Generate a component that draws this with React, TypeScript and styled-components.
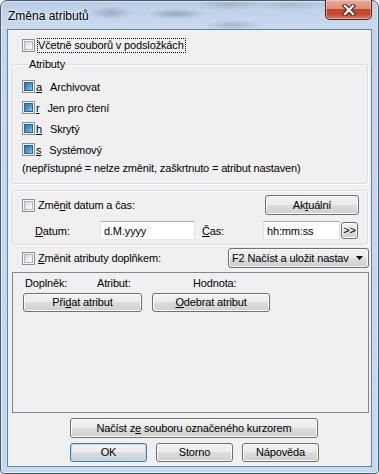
import styled, { createGlobalStyle } from 'styled-components';

const GlobalStyle = createGlobalStyle`
  html, body {
    margin: 0;
    padding: 0;
    background: #ffffff;
  }
  body {
    color: #000;
    font-family: "Liberation Sans", Arial, sans-serif;
    font-size: 11px;
    letter-spacing: -0.15px;
  }
`;

const Window = styled.div`
  box-sizing: border-box;
  display: flex;
  flex-direction: column;
  width: 379px;
  height: 474px;
  padding: 0 6px 6px;
  border: 1px solid #4d5967;
  border-radius: 7px 7px 4px 4px;
  background:
    radial-gradient(ellipse 22px 7px at 110px 12px, rgba(70, 80, 95, 0.28), transparent),
    radial-gradient(ellipse 30px 5px at 175px 13px, rgba(60, 70, 85, 0.32), transparent),
    radial-gradient(ellipse 36px 6px at 228px 3px, rgba(70, 80, 95, 0.22), transparent),
    radial-gradient(ellipse 30px 5px at 232px 24px, rgba(70, 80, 95, 0.25), transparent),
    radial-gradient(ellipse 40px 5px at 290px 4px, rgba(80, 90, 105, 0.18), transparent),
    linear-gradient(to bottom, #b9cee6 0, #c8daee 28px, #bed6f0 29px, #c2daf2 100%);
  box-shadow: inset 0 0 0 1px rgba(255, 255, 255, 0.5);
`;

const TitleBar = styled.div`
  display: flex;
  flex: none;
  align-items: flex-start;
  justify-content: space-between;
  height: 28px;
`;

const Title = styled.div`
  margin: 8px 0 0 1px;
  font-size: 12px;
  line-height: 15px;
  letter-spacing: 0;
  text-shadow: 0 0 6px rgba(255, 255, 255, 0.9), 0 0 2px rgba(255, 255, 255, 0.9);
`;

const CloseButton = styled.div`
  box-sizing: border-box;
  display: flex;
  align-items: center;
  justify-content: center;
  width: 47px;
  height: 20px;
  margin-top: -1px;
  border: 1px solid #5e2418;
  border-top: none;
  border-radius: 0 0 5px 5px;
  background: linear-gradient(
    to bottom,
    #e9ad9f 0%,
    #dc8e7c 45%,
    #c4452d 50%,
    #c9472f 75%,
    #de7c60 100%
  );
  box-shadow: inset 0 0 0 1px rgba(255, 220, 210, 0.45);
`;

const Client = styled.div`
  box-sizing: border-box;
  display: flex;
  flex: none;
  flex-direction: column;
  align-items: flex-start;
  height: 438px;
  padding: 7px 2px 0 4px;
  border: 1px solid #6f8094;
  background: #f0f0f0;
`;

const Check = styled.span<{ $mixed?: boolean }>`
  position: relative;
  box-sizing: border-box;
  flex: none;
  width: 13px;
  height: 13px;
  border: 1px solid #8e8f8f;
  background: #f6f6f6;

  &::after {
    content: '';
    position: absolute;
    top: 1px;
    left: 1px;
    box-sizing: border-box;
    width: 9px;
    height: 9px;
    border: 1px solid ${(p) => (p.$mixed ? '#2a6290' : '#b1b5ba')};
    background: ${(p) =>
      p.$mixed
        ? 'linear-gradient(135deg, #3079b3 0%, #4898d0 50%, #84c8ec 100%)'
        : 'linear-gradient(135deg, #cfd2d7 0%, #eceef0 55%, #fbfbfb 100%)'};
  }
`;

const CheckRow = styled.div<{ $indent?: number }>`
  display: flex;
  flex: none;
  align-items: center;
  height: 16px;
  margin-left: ${(p) => p.$indent ?? 0}px;
`;

const CheckText = styled.span`
  margin-left: 3px;
  line-height: 13px;
  white-space: nowrap;
`;

const FocusText = styled.span`
  margin-left: 2px;
  padding-right: 1px;
  border: 1px dotted #000;
  line-height: 13px;
  white-space: nowrap;
`;

const Group = styled.fieldset<{ $gap: number }>`
  box-sizing: border-box;
  width: 356px;
  min-width: 0;
  margin: ${(p) => p.$gap}px 0 0;
  padding: 4px 8px 4px 9px;
  border: 1px solid #d5dfe5;
  border-radius: 3px;
  box-shadow: inset 1px 1px 0 #ffffff, 1px 1px 0 #ffffff;
`;

const AttrGroup = styled(Group)`
  padding: 5px 8px 7px 9px;
`;

const Legend = styled.legend`
  margin-left: 6px;
  padding: 0 1px;
  line-height: 13px;
`;

const AttrRow = styled.div`
  display: flex;
  align-items: center;
  height: 21px;
  white-space: nowrap;
`;

const Key = styled.u`
  margin: 0 8px 0 1px;
`;

const Note = styled.div`
  height: 16px;
  line-height: 16px;
  white-space: nowrap;
`;

const DateRow = styled.div`
  display: flex;
  align-items: center;
  height: 20px;
`;

const TimeRow = styled.div`
  display: flex;
  align-items: center;
  height: 19px;
  margin-top: 6px;
  padding-left: 13px;
`;

const FieldLabel = styled.span<{ $w: number; $gap?: number }>`
  flex: none;
  width: ${(p) => p.$w}px;
  margin-left: ${(p) => p.$gap ?? 0}px;
`;

const TextBox = styled.input<{ $w: number }>`
  box-sizing: border-box;
  flex: none;
  width: ${(p) => p.$w}px;
  height: 19px;
  margin: 0;
  padding: 0 3px;
  border: 1px solid;
  border-color: #abadb3 #dbdfe6 #e3e9ef #e2e3ea;
  background: #ffffff;
  color: #000;
  font: inherit;
  letter-spacing: inherit;
  outline: none;
`;

const Button = styled.button<{ $w: number; $h?: number; $default?: boolean }>`
  box-sizing: border-box;
  flex: none;
  width: ${(p) => p.$w}px;
  height: ${(p) => p.$h ?? 20}px;
  margin: 0;
  padding: 0;
  border: 1px solid ${(p) => (p.$default ? '#3c7fb1' : '#707070')};
  border-radius: 3px;
  background: linear-gradient(to bottom, #f2f2f2 0%, #ebebeb 49%, #dddddd 50%, #cfcfcf 100%);
  box-shadow: inset 0 0 0 1px ${(p) => (p.$default ? '#b3dff5' : '#fbfbfb')};
  color: #000;
  font: inherit;
  letter-spacing: inherit;
  line-height: 13px;
  white-space: nowrap;
`;

const SmallButton = styled(Button)`
  margin-left: 1px;
`;

const PushRight = styled.span`
  flex: 1;
`;

const PluginRow = styled.div`
  display: flex;
  align-items: center;
  width: 357px;
  height: 20px;
  margin-top: 3px;
`;

const Combo = styled.div`
  box-sizing: border-box;
  display: flex;
  flex: none;
  align-items: center;
  width: 141px;
  height: 20px;
  padding: 0 5px 0 3px;
  border: 1px solid #707070;
  border-radius: 3px;
  background: linear-gradient(to bottom, #f2f2f2 0%, #ebebeb 49%, #dddddd 50%, #cfcfcf 100%);
  box-shadow: inset 0 0 0 1px #fbfbfb;
`;

const ComboText = styled.span`
  white-space: nowrap;
`;

const Panel = styled.div`
  box-sizing: border-box;
  display: flex;
  flex-direction: column;
  width: 357px;
  height: 141px;
  margin-top: 4px;
  padding: 3px 0 0 10px;
  border: 1px solid #828790;
`;

const ColumnHeads = styled.div`
  display: flex;
  height: 14px;
  padding-left: 2px;
  line-height: 14px;
`;

const Head = styled.span<{ $w?: number }>`
  width: ${(p) => (p.$w ? `${p.$w}px` : 'auto')};
`;

const PanelButtons = styled.div`
  display: flex;
  gap: 10px;
  margin-top: 3px;
`;

const BottomButtons = styled.div`
  display: flex;
  gap: 9px;
  margin: 5px 0 0 58px;
`;

const LoadButton = styled(Button)`
  margin: 5px 0 0 58px;
`;

function CloseGlyph() {
  return (
    <svg width="14" height="12" viewBox="0 0 14 12">
      <path d="M3 2 L11 10 M11 2 L3 10" stroke="#3b1d17" strokeWidth="4.4" strokeLinecap="square" />
      <path d="M3 2 L11 10 M11 2 L3 10" stroke="#ffffff" strokeWidth="2.4" strokeLinecap="square" />
    </svg>
  );
}

function ArrowGlyph() {
  return (
    <svg width="7" height="4" viewBox="0 0 7 4">
      <path d="M0 0 H7 L3.5 4 Z" fill="#000" />
    </svg>
  );
}

const attributes = [
  { key: 'a', name: 'Archivovat' },
  { key: 'r', name: 'Jen pro čtení' },
  { key: 'h', name: 'Skrytý' },
  { key: 's', name: 'Systémový' },
];

export default function App() {
  return (
    <>
      <GlobalStyle />
      <Window>
        <TitleBar>
          <Title>Změna atributů</Title>
          <CloseButton>
            <CloseGlyph />
          </CloseButton>
        </TitleBar>
        <Client>
          <CheckRow $indent={10}>
            <Check />
            <FocusText>Včetně souborů v podsložkách</FocusText>
          </CheckRow>

          <AttrGroup $gap={5}>
            <Legend>Atributy</Legend>
            {attributes.map((a) => (
              <AttrRow key={a.key}>
                <Check $mixed />
                <Key>{a.key}</Key>
                {a.name}
              </AttrRow>
            ))}
            <Note>(nepřístupné = nelze změnit, zaškrtnuto = atribut nastaven)</Note>
          </AttrGroup>

          <Group $gap={6}>
            <DateRow>
              <Check />
              <CheckText>
                Změ<u>n</u>it datum a čas:
              </CheckText>
              <PushRight />
              <Button $w={94}>
                Ak<u>t</u>uální
              </Button>
            </DateRow>
            <TimeRow>
              <FieldLabel $w={65}>
                <u>D</u>atum:
              </FieldLabel>
              <TextBox $w={95} defaultValue="d.M.yyyy" readOnly />
              <FieldLabel $w={61} $gap={7}>
                <u>Č</u>as:
              </FieldLabel>
              <TextBox $w={77} defaultValue="hh:mm:ss" readOnly />
              <SmallButton $w={17} $h={17}>
                &gt;&gt;
              </SmallButton>
            </TimeRow>
          </Group>

          <PluginRow>
            <CheckRow $indent={10}>
              <Check />
              <CheckText>
                <u>Z</u>měnit atributy doplňkem:
              </CheckText>
            </CheckRow>
            <PushRight />
            <Combo>
              <ComboText>F2 Načíst a uložit nastav</ComboText>
              <PushRight />
              <ArrowGlyph />
            </Combo>
          </PluginRow>

          <Panel>
            <ColumnHeads>
              <Head $w={72}>Doplněk:</Head>
              <Head $w={96}>Atribut:</Head>
              <Head>Hodnota:</Head>
            </ColumnHeads>
            <PanelButtons>
              <Button $w={119} $h={19}>
                Při<u>d</u>at atribut
              </Button>
              <Button $w={118} $h={19}>
                <u>O</u>debrat atribut
              </Button>
            </PanelButtons>
          </Panel>

          <LoadButton $w={248}>
            Načíst z<u>e</u> souboru označeného kurzorem
          </LoadButton>

          <BottomButtons>
            <Button $w={77} $h={19} $default>
              OK
            </Button>
            <Button $w={77} $h={19}>
              Storno
            </Button>
            <Button $w={77} $h={19}>
              Nápověda
            </Button>
          </BottomButtons>
        </Client>
      </Window>
    </>
  );
}
